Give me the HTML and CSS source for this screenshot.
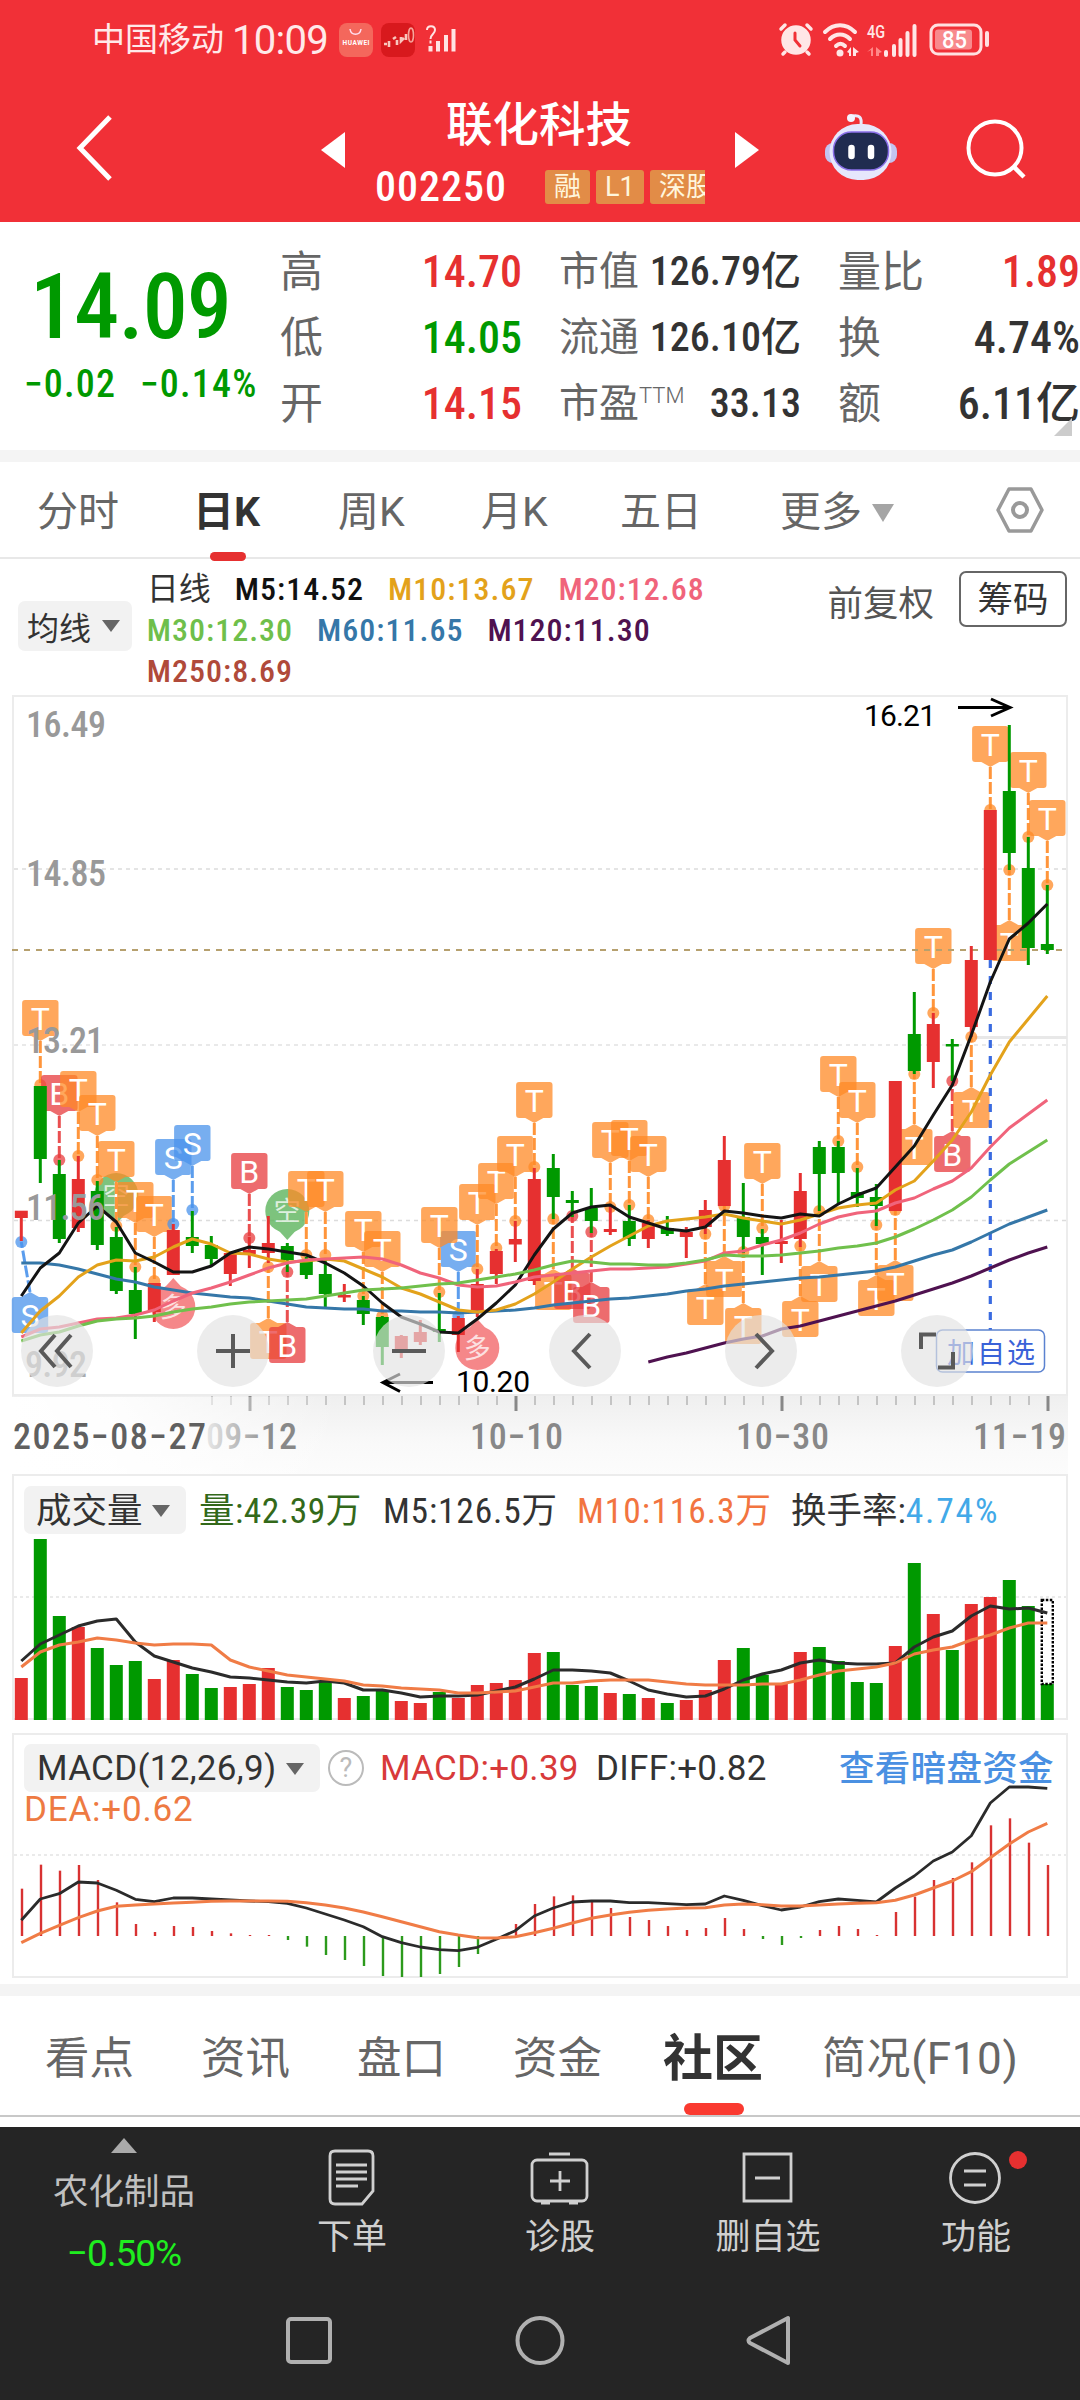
FILE: index.html
```html
<!DOCTYPE html>
<html lang="zh-CN">
<head>
    <meta charset="UTF-8">
    <meta name="viewport" content="width=device-width, initial-scale=1.0">
    <title>联化科技 002250</title>
    <link rel="stylesheet" href="styles.css">
</head>
<body>
    <header class="header">
        <div class="status">
            <span class="carrier">中国移动</span>
            <span class="clock">10:09</span>
            <svg class="app-icon" width="34" height="34" viewBox="0 0 34 34">
                <rect width="34" height="34" rx="8" fill="#f4675c"/>
                <path d="M11 6c1 7 10 7 11 0" fill="none" stroke="#fde" stroke-width="1.5"/>
                <text x="3.500" y="22" font-size="6.5" font-weight="700" fill="#fff" textLength="27">HUAWEI</text>
            </svg>
            <svg class="app-icon" width="34" height="34" viewBox="0 0 34 34">
                <rect width="34" height="34" rx="8" fill="#d8191d"/>
                <path d="M3 21h3M8 18v6M12 16l3-2M16 17v5M20 14v4l3-3M25 11v6" fill="none" stroke="#f9c7be" stroke-width="2.600"/>
                <ellipse cx="30" cy="12" rx="2.500" ry="7" fill="none" stroke="#f6a59c" stroke-width="1.6"/>
            </svg>
            <svg class="sim" width="32" height="34" viewBox="0 0 32 34">
                <path d="M2 7c0-5 8-5 8 0 0 4-4.500 4-4.500 9M5.500 17.500v3" fill="none" stroke="#ffe3e3" stroke-width="2"/>
                <path d="M5.500 23v5.500M13 18v10.500M21 12v16.500M28.500 6v22.500" stroke="#ffe3e3" stroke-width="4"/>
            </svg>
            <svg class="sys" width="216" height="36" viewBox="0 0 216 36">
                <g fill="none" stroke="#ffe6e6" stroke-width="3.5" stroke-linecap="round">
                    <circle cx="19" cy="18" r="13" fill="#ffe6e6"/>
                    <path d="M4 7l4-4M34 7l-4-4M8 30l-2 2M30 30l2 2"/>
                    <path d="M18 11v7l5 6" stroke="#f13037" stroke-width="3"/>
                    <path d="M48 10c9-9 21-9 30 0M53 17c6-6 14-6 20 0M59 24c3-3 6-3 9 0" stroke-width="4"/>
                </g>
                <circle cx="63" cy="31" r="3.5" fill="#ffe6e6"/>
                <path d="M74 25v9h-2v-3l-2-1zM76 34v-9l6 5-3 1v3z" fill="#ffe6e6"/>
                <text x="90" y="16" font-size="19" font-weight="500" fill="#ffe6e6" textLength="18" lengthAdjust="spacingAndGlyphs">4G</text>
                <path d="M96 25v9h-2v-6l-4 2zM99 34v-9l6 5-3 1v3z" fill="#f88"/>
                <path d="M109 30v3M117 24v9M123.500 18v15M130.500 11v22M137.500 4v29" stroke="#ffe6e6" stroke-width="4" stroke-linecap="round"/>
                <rect x="154" y="3" width="50" height="29" rx="7" fill="none" stroke="#ffe0e0" stroke-width="3"/>
                <rect x="158" y="7.500" width="37" height="20" rx="3" fill="#f88a8d"/>
                <path d="M210 11v12" stroke="#ffe0e0" stroke-width="4" stroke-linecap="round"/>
                <text x="165" y="26" font-size="23" font-weight="500" fill="#fff" textLength="25" lengthAdjust="spacingAndGlyphs">85</text>
            </svg>
        </div>
        <div class="titlebar">
            <svg class="back" width="46" height="72" viewBox="0 0 46 72"><path d="M39 5L9 36l30 31" fill="none" stroke="#fff" stroke-width="5"/></svg>
            <svg class="prev" width="26" height="38" viewBox="0 0 26 38"><path d="M25 1v36L1 19z" fill="#fff"/></svg>
            <div class="stock">
                <h1>联化科技</h1>
                <div class="code">
                    <span class="num">002250</span>
                    <div class="tags"><i>融</i><i>L1</i><i>深股</i></div>
                </div>
            </div>
            <svg class="next" width="26" height="38" viewBox="0 0 26 38"><path d="M1 1v36l24-18z" fill="#fff"/></svg>
            <svg class="robot" width="76" height="76" viewBox="0 0 76 76">
                <path d="M37 15c1-8-2-10-8-9" fill="none" stroke="#e9e9fb" stroke-width="3"/>
                <circle cx="27" cy="8" r="4" fill="#f3f3ff"/>
                <rect x="1" y="33" width="72" height="20" rx="8" fill="#c3c4f0"/>
                <rect x="5.500" y="14" width="62" height="56" rx="28" fill="#e6e7fc"/>
                <rect x="9.500" y="22" width="55" height="38" rx="18" fill="#202c50" stroke="#8a6fe8" stroke-width="1.500"/>
                <path d="M27.500 38v8M47 38v8" stroke="#fff" stroke-width="6.500" stroke-linecap="round"/>
            </svg>
            <svg class="search" width="66" height="66" viewBox="0 0 66 66"><circle cx="32" cy="32" r="26.500" fill="none" stroke="#fff" stroke-width="4"/><path d="M51 51l10 10" stroke="#fff" stroke-width="4.500"/></svg>
        </div>
    </header>

    <section class="quote">
        <div class="price green">
            <b>14.09</b>
            <div class="change"><span>−0.02</span><span>−0.14%</span></div>
        </div>
        <dl class="col c1">
            <dt>高</dt><dd class="red">14.70</dd>
            <dt>低</dt><dd class="green">14.05</dd>
            <dt>开</dt><dd class="red">14.15</dd>
        </dl>
        <dl class="col c2">
            <dt>市值</dt><dd>126.79亿</dd>
            <dt>流通</dt><dd>126.10亿</dd>
            <dt>市盈<sup>TTM</sup></dt><dd>33.13</dd>
        </dl>
        <dl class="col c3">
            <dt>量比</dt><dd class="red">1.89</dd>
            <dt>换</dt><dd>4.74%</dd>
            <dt>额</dt><dd>6.11亿</dd>
        </dl>
        <svg class="corner" width="18" height="18" viewBox="0 0 18 18"><path d="M18 0v18H0z" fill="#ccc"/></svg>
    </section>

    <nav class="period">
        <a>分时</a>
        <a class="on">日K</a>
        <a>周K</a>
        <a>月K</a>
        <a>五日</a>
        <a>更多<svg width="24" height="20" viewBox="0 0 24 20"><path d="M1 1h22L12 19z" fill="#a5a5a5"/></svg></a>
        <svg class="gear" width="52" height="50" viewBox="0 0 52 50"><path d="M14 4h22l11 21-11 21H14L3 25z" fill="none" stroke="#999" stroke-width="3.500" stroke-linejoin="round"/><circle cx="25" cy="25" r="7" fill="none" stroke="#999" stroke-width="4"/></svg>
    </nav>

    <section class="legend">
        <div class="select">均线<svg width="18" height="14" viewBox="0 0 18 14"><path d="M0 1h18L9 13z" fill="#666"/></svg></div>
        <div class="mas">
            <span class="day">日线</span><span class="m5">M5:14.52</span><span class="m10">M10:13.67</span><span class="m20">M20:12.68</span><br>
            <span class="m30">M30:12.30</span><span class="m60">M60:11.65</span><span class="m120">M120:11.30</span><br>
            <span class="m250">M250:8.69</span>
        </div>
        <span class="adjust">前复权</span>
        <span class="chips">筹码</span>
    </section>

    <section class="kline">
        <svg id="kline" width="1080" height="780" viewBox="0 695 1080 780"></svg>
        <div class="tools">
            <i><svg viewBox="0 0 72 72"><path d="M34 20L20 36l14 16M50 20L36 36l14 16"/></svg></i>
            <i><svg viewBox="0 0 72 72"><path d="M36 19v34M19 36h34"/></svg></i>
            <i><svg viewBox="0 0 72 72"><path d="M19 36h34"/></svg></i>
            <i><svg viewBox="0 0 72 72"><path d="M41 19L25 36l16 17"/></svg></i>
            <i><svg viewBox="0 0 72 72"><path d="M31 19l16 17-16 17"/></svg></i>
            <i><svg viewBox="0 0 72 72"><path d="M20 34V19.500h15M37 52.500h15V37"/></svg></i>
        </div>
    </section>

    <section class="panel volume">
        <div class="panel-head">
            <div class="select">成交量<svg width="18" height="14" viewBox="0 0 18 14"><path d="M0 1h18L9 13z" fill="#666"/></svg></div>
            <span class="v1">量:42.39万</span>
            <span class="v2">M5:126.5万</span>
            <span class="v3">M10:116.3万</span>
            <span class="v4">换手率:<em>4.74%</em></span>
        </div>
        <svg class="plot" id="volume" width="1080" height="260" viewBox="0 1473 1080 260"></svg>
    </section>

    <section class="panel macd">
        <div class="panel-head">
            <div class="select">MACD(12,26,9)<svg width="18" height="14" viewBox="0 0 18 14"><path d="M0 1h18L9 13z" fill="#666"/></svg></div>
            <span class="help">?</span>
            <span class="d1">MACD:+0.39</span>
            <span class="d2">DIFF:+0.82</span>
            <a class="dark-pool">查看暗盘资金</a>
        </div>
        <div class="dea">DEA:+0.62</div>
        <svg class="plot" id="macd" width="1080" height="251" viewBox="0 1733 1080 251"></svg>
    </section>

    <nav class="topics">
        <a>看点</a>
        <a>资讯</a>
        <a>盘口</a>
        <a>资金</a>
        <a class="on">社区</a>
        <a class="f10">简况(F10)</a>
    </nav>

    <footer class="footer">
        <div class="actions">
            <div class="sector">
                <svg width="26" height="15" viewBox="0 0 26 15"><path d="M13 0l13 15H0z" fill="#aaa"/></svg>
                <span>农化制品</span>
                <b>−0.50%</b>
            </div>
            <div class="act">
                <svg viewBox="0 0 60 60"><path d="M13 4h33q5 0 5 5v35L40 57H13q-5 0-5-5V9q0-5 5-5z"/><path d="M14 18h31M14 25h31M14 32h31M14 39h22"/></svg>
                <span>下单</span>
            </div>
            <div class="act">
                <svg viewBox="0 0 60 60"><rect x="2" y="13" width="55" height="41" rx="5"/><path d="M19 7h21M11 56h9M39 56h9M30 24v20M20 34h20"/></svg>
                <span>诊股</span>
            </div>
            <div class="act">
                <svg viewBox="0 0 60 60"><path d="M6 7h47v47H6zM17 31h25"/></svg>
                <span>删自选</span>
            </div>
            <div class="act">
                <svg viewBox="0 0 60 60"><circle cx="29" cy="31" r="24.500"/><path d="M18 24h22M18 38h22"/></svg>
                <span>功能</span>
                <i class="dot"></i>
            </div>
        </div>
        <div class="sysnav">
            <svg viewBox="0 0 50 50"><rect x="3" y="4" width="42" height="43" rx="3"/></svg>
            <svg viewBox="0 0 50 50"><circle cx="25" cy="25.500" r="22.500"/></svg>
            <svg viewBox="0 0 50 50"><path d="M43 3v45L5 28q-3-2 0-5z"/></svg>
        </div>
    </footer>
    <script src="script.js"></script>
</body>
</html>
```

FILE: styles.css
```css
* {
    margin: 0;
    padding: 0;
    box-sizing: border-box;
}

body {
    width: 1080px;
    height: 2400px;
    overflow: hidden;
    background: #fff;
    color: #333;
    font-family: Roboto, "Noto Sans CJK SC", sans-serif;
    font-stretch: 87%;
}

svg {
    display: block;
    flex: none;
    overflow: visible;
}

i,
em {
    font-style: normal;
}

span,
a {
    white-space: nowrap;
}

.red {
    color: #e63030 !important;
}

.green {
    color: #009900 !important;
}

/* 顶部 */
.header {
    height: 222px;
    background: #f13037;
    color: #fff;
}

.status {
    display: flex;
    align-items: center;
    height: 80px;
    padding: 0 87px 0 92px;
    color: #ffe9e9;
}

.carrier {
    width: 140px;
    font-size: 33px;
    line-height: 40px;
}

.clock {
    width: 107px;
    padding-top: 2px;
    font-size: 40px;
    line-height: 40px;
    font-stretch: 100%;
    letter-spacing: -0.7px;
}

.app-icon {
    margin-right: 8px;
}

.sim {
    margin-left: 2px;
}

.sys {
    margin-left: auto;
}

.titlebar {
    display: flex;
    align-items: flex-start;
    height: 142px;
    padding-left: 71px;
}

.back {
    margin-top: 32px;
}

.prev {
    margin: 51px 0 0 203px;
}

.stock {
    width: 388px;
    padding-left: 29px;
}

.stock h1 {
    height: 64px;
    margin-top: 13px;
    padding-left: 71px;
    font-size: 46.500px;
    font-weight: 500;
    line-height: 64px;
}

.code {
    display: flex;
    align-items: center;
    height: 58px;
    margin-top: 1px;
}

.code .num {
    width: 170px;
    font-size: 42px;
    line-height: 58px;
    font-weight: 500;
    letter-spacing: 1px;
}

.tags {
    display: flex;
    gap: 6px;
    width: 160px;
    overflow: hidden;
}

.tags i {
    flex: none;
    width: 45px;
    padding-left: 9px;
    height: 34px;
    line-height: 34px;
    border-radius: 3px;
    background: #e28c47;
    color: #fff6dc;
    font-size: 27px;
    font-stretch: 100%;
}

.tags i:nth-child(2) {
    width: 48px;
}

.tags i:nth-child(3) {
    width: 72px;
}

.next {
    margin-top: 51px;
}

.robot {
    margin: 30px 0 0 64px;
}

.search {
    margin: 36px 0 0 63px;
}

/* 报价 */
.quote {
    position: relative;
    display: flex;
    height: 240px;
    border-bottom: 12px solid #f4f4f4;
}

.price {
    width: 280px;
}

.price b {
    display: block;
    height: 100px;
    margin-top: 36px;
    padding-left: 30px;
    font-size: 90px;
    font-weight: 500;
    line-height: 100px;
    letter-spacing: -0.8px;
}

.change {
    display: flex;
    padding: 1px 0 0 24px;
    font-size: 38px;
    font-weight: 500;
    line-height: 50px;
    letter-spacing: 1.2px;
}

.change span:first-child {
    width: 116px;
}

.col {
    display: grid;
    grid-template-columns: 80px 1fr;
    grid-template-rows: repeat(3, 66px);
    padding-top: 17px;
    line-height: 66px;
    white-space: nowrap;
}

.col dt {
    color: #666;
    font-size: 43px;
}

.col dd {
    text-align: right;
    font-size: 44px;
    font-weight: 500;
}

.c1 {
    width: 242px;
}

.c2 {
    width: 279px;
    padding-left: 37px;
}

.c2 dt {
    font-size: 40px;
}

.c2 dd {
    font-size: 40px;
}

.c3 {
    width: 279px;
    padding-left: 37px;
}

.c2 sup {
    font-size: 22px;
    font-weight: 300;
    line-height: 0;
    font-stretch: 100%;
}

.corner {
    position: absolute;
    right: 8px;
    bottom: 14px;
}

/* 周期 */
.period {
    display: grid;
    grid-template-columns: 156px 145px 143px 139px 160px 215px 60px;
    height: 97px;
    padding-left: 37px;
    border-bottom: 2px solid #e8e8e8;
    font-size: 41px;
    line-height: 97px;
    color: #666;
    font-stretch: 100%;
}

.period a {
    display: flex;
    align-items: center;
    gap: 9px;
    position: relative;
    padding-top: 2px;
}

.period .on {
    color: #333;
    font-weight: 700;
}

.period .on::after {
    content: '';
    position: absolute;
    left: 17px;
    bottom: 0;
    width: 36px;
    height: 9px;
    border-radius: 5px;
    background: #e63030;
}

.gear {
    margin-top: 23px;
}

/* 均线 */
.legend {
    display: flex;
    height: 136px;
    padding: 12px 13px 0 18px;
    font-size: 32px;
}

.select {
    display: flex;
    align-items: center;
    justify-content: space-between;
    border-radius: 7px;
    background: #f2f2f2;
    color: #333;
}

.legend .select {
    width: 114px;
    height: 50px;
    margin-top: 30px;
    padding: 0 12px 0 9px;
}

.mas {
    width: 679px;
    padding-left: 15px;
    line-height: 41px;
    margin-top: -2px;
    font-weight: 500;
    letter-spacing: 1px;
}

.mas span {
    margin-right: 24px;
}

.mas .day {
    font-weight: 400;
    letter-spacing: 0;
}

.m5 { color: #111; }
.m10 { color: #e3a21b; }
.m20 { color: #f0647b; }
.m30 { color: #6fbf4b; }
.m60 { color: #3577a8; }
.m120 { color: #4f1250; }
.m250 { color: #b04a3a; }

.adjust {
    width: 150px;
    padding-left: 18px;
    line-height: 66px;
    font-size: 35.500px;
    color: #555;
}

.chips {
    width: 108px;
    height: 56px;
    border: 2px solid #666;
    border-radius: 7px;
    text-align: center;
    font-size: 35.500px;
    line-height: 55px;
}

/* K线 */
.kline {
    position: relative;
    height: 780px;
}

.tools {
    position: absolute;
    top: 620px;
    left: 21px;
    display: flex;
    gap: 104px;
}

.tools i {
    width: 72px;
    height: 72px;
    border-radius: 50%;
    background: rgba(226, 226, 226, 0.66);
}

.tools path {
    fill: none;
    stroke: #5a5a5a;
    stroke-width: 4;
}

svg text {
    font-family: Roboto, "Noto Sans CJK SC", sans-serif;
    font-stretch: 100%;
}

svg .label {
    font-stretch: 87%;
    font-weight: 500;
}

/* 副图 */
.panel {
    position: relative;
    padding: 11px 0 0 24px;
    font-size: 35.500px;
}

.volume {
    height: 258px;
}

.macd {
    height: 263px;
    border-bottom: 12px solid #f4f4f4;
    font-stretch: 100%;
    font-size: 35px;
    letter-spacing: 0.3px;
}

.plot {
    position: absolute;
    top: 0;
    left: 0;
}

.volume .plot {
    top: -2px;
}

.panel-head {
    position: relative;
    z-index: 1;
    display: flex;
    align-items: center;
    height: 48px;
    line-height: 50px;
    white-space: nowrap;
}

.panel-head > span,
.dark-pool {
    padding-top: 2px;
}

.volume .select {
    width: 162px;
    height: 48px;
    padding: 1px 16px 0 12px;
}

.v1 {
    width: 184px;
    margin-left: 13px;
    color: #33691a;
    letter-spacing: 0.5px;
}

.v2 {
    width: 194px;
    letter-spacing: 0.8px;
}

.v3 {
    width: 214px;
    color: #f27440;
    letter-spacing: 1px;
}

.v4 em {
    color: #42a9e8;
    letter-spacing: 1.800px;
}

.macd .select {
    width: 296px;
    height: 48px;
    padding: 2px 16px 0 13px;
}

.panel-head .help {
    width: 36px;
    height: 36px;
    margin-left: 8px;
    padding: 0;
    border: 2.500px solid #bbb;
    border-radius: 50%;
    color: #bbb;
    text-align: center;
    font-size: 27px;
    line-height: 32px;
}

.d1 {
    width: 216px;
    margin-left: 16px;
    color: #d83a3a;
}

.d2 {
    width: 243px;
}

.dark-pool {
    color: #4a90e2;
    font-size: 35.500px;
    font-weight: 500;
}

.dea {
    position: relative;
    z-index: 1;
    color: #ee7a42;
    line-height: 36px;
    letter-spacing: 0.8px;
}

/* 栏目 */
.topics {
    display: flex;
    height: 121px;
    padding-left: 45px;
    border-bottom: 2px solid #c8c8c8;
    font-size: 44.500px;
    font-stretch: 100%;
    line-height: 127px;
    color: #666;
}

.topics a {
    width: 156px;
    position: relative;
}

.topics .on {
    width: 153px;
    margin-left: -6px;
    color: #333;
    font-size: 50px;
    font-weight: 700;
}

.topics .on::after {
    content: '';
    position: absolute;
    left: 21px;
    bottom: 0;
    width: 60px;
    height: 12px;
    border-radius: 6px;
    background: #fa3a30;
}

.topics .f10 {
    margin-left: 6px;
    font-size: 44px;
    letter-spacing: 0.6px;
}

/* 底部 */
.footer {
    height: 273px;
    margin-top: 10px;
    background: #252525;
    color: #d0d0d0;
}

.actions {
    display: grid;
    grid-template-columns: 248px 208px 208px 208px 208px;
    height: 165px;
}

.sector {
    display: flex;
    flex-direction: column;
    align-items: center;
    padding-top: 11px;
    font-size: 35.500px;
    color: #c0c0c0;
}

.sector span {
    height: 62px;
    margin-top: 8px;
    line-height: 62px;
}

.sector b {
    color: #1fee1f;
    font-size: 37px;
    font-weight: 400;
    font-stretch: 100%;
    line-height: 62px;
    letter-spacing: -1px;
}

.act {
    position: relative;
    display: flex;
    flex-direction: column;
    align-items: center;
    padding-top: 20px;
    font-size: 35px;
    line-height: 62px;
}

.act svg {
    width: 60px;
    height: 60px;
    fill: none;
    stroke: #d0d0d0;
    stroke-width: 2.8;
}

.dot {
    position: absolute;
    top: 24px;
    left: 137px;
    width: 18px;
    height: 18px;
    border-radius: 50%;
    background: #e63030;
}

.sysnav {
    display: flex;
    justify-content: center;
    gap: 180px;
    padding-top: 23px;
}

.sysnav svg {
    width: 50px;
    height: 50px;
    fill: none;
    stroke: #b0b0b0;
    stroke-width: 4;
    stroke-linejoin: round;
}
```

FILE: script.js
```javascript
let RED = '#e63030'
let GREEN = '#009900'
let X = i => 21.3 + i * 19 // 每根K线间隔19

function line(pts, color, w = 3, start = 0, f = v => v) {
    let p = pts.map((v, i) => X(i + start).toFixed(1) + ',' + f(v).toFixed(1)).join(' ')
    return `<polyline points="${p}" fill="none" stroke="${color}" stroke-width="${w}" stroke-linejoin="round"/>`
}

function rect(x, y, w, h, fill, more = '') {
    return `<rect x="${x}" y="${y}" width="${w}" height="${h}" fill="${fill}" ${more}/>`
}

function seg(x1, y1, x2, y2, color, w, dash = '') {
    return `<line x1="${x1}" y1="${y1}" x2="${x2}" y2="${y2}" stroke="${color}" stroke-width="${w}" stroke-dasharray="${dash}"/>`
}

function text(x, y, s, size, fill, len, more = '') {
    return `<text x="${x}" y="${y}" font-size="${size}" fill="${fill}" textLength="${len}" ${more}>${s}</text>`
}

// 颜色, 实体上, 实体下, 最高, 最低
let candles = [
    ['r', 1210.7, 1218, 1211, 1241], ['g', 1086, 1159, 1086, 1183], ['g', 1174, 1239, 1160, 1243],
    ['r', 1179, 1228, 1156, 1232], ['g', 1191, 1245, 1181, 1250], ['g', 1237, 1291, 1227, 1294],
    ['g', 1290, 1314, 1267, 1339], ['r', 1283, 1312, 1283, 1322], ['r', 1230, 1275, 1224, 1275],
    ['g', 1237, 1246, 1211, 1253], ['g', 1245, 1259, 1236, 1265], ['r', 1253, 1274, 1253, 1286],
    ['r', 1250, 1254, 1237, 1268], ['r', 1243, 1253, 1216, 1263], ['g', 1246, 1260, 1243, 1272],
    ['g', 1261, 1275, 1257, 1279], ['g', 1274, 1294, 1260, 1307], ['r', 1295, 1297.5, 1284, 1302],
    ['g', 1300, 1314, 1296, 1325], ['g', 1317, 1347, 1316, 1365], ['r', 1336, 1352, 1335, 1358],
    ['r', 1332, 1342, 1320, 1345], ['g', 1329, 1332, 1293, 1342], ['r', 1318, 1335, 1316, 1352],
    ['r', 1284, 1312, 1269, 1317], ['r', 1251, 1274, 1249, 1284], ['r', 1239, 1244.5, 1221, 1262],
    ['r', 1179, 1281, 1168, 1285], ['g', 1168, 1197, 1154, 1219], ['g', 1200, 1203, 1191, 1217],
    ['g', 1208, 1221, 1188, 1233], ['r', 1229, 1232, 1205, 1235], ['g', 1221, 1239, 1205, 1246],
    ['r', 1223, 1239, 1220, 1248], ['g', 1228, 1234, 1216, 1236], ['r', 1232, 1237, 1227, 1258],
    ['r', 1210, 1227, 1200, 1234], ['r', 1160, 1206, 1136, 1206], ['g', 1217, 1237, 1183, 1253],
    ['g', 1237, 1244, 1229, 1275], ['r', 1241, 1244, 1220, 1263], ['r', 1191, 1239, 1173, 1247],
    ['g', 1147, 1174, 1141, 1211], ['g', 1147, 1173, 1141, 1205], ['g', 1192, 1198, 1168, 1207],
    ['g', 1197, 1206, 1184, 1226], ['r', 1081, 1211, 1081, 1211], ['g', 1034, 1071, 992, 1074],
    ['r', 1024, 1062, 1013, 1088], ['g', 1044, 1046.5, 1039, 1081], ['r', 960, 1027, 946, 1037],
    ['r', 810, 960, 810, 960], ['g', 791, 853, 725, 870], ['g', 868, 948, 837, 965], ['g', 944, 950, 885, 954]
]

// 类型, 序号, 方框顶部, 圆点位置
let marks = [
    ['T', 1, 1000, 1085], ['B', 2, 1075, 1160], ['T', 3, 1071, 1156], ['T', 4, 1095, 1180], ['T', 5, 1141, 1226],
    ['T', 6, 1182, 1267], ['T', 7, 1196, 1281], ['S', 8, 1139, 1224], ['S', 9, 1125, 1210], ['B', 12, 1153, 1238],
    ['T', 15, 1171, 1255], ['T', 16, 1171, 1255], ['T', 18, 1211, 1296], ['T', 19, 1231, 1316], ['S', 23, 1231, 1316],
    ['T', 22, 1207, 1292], ['T', 24, 1184, 1269], ['T', 25, 1163, 1248], ['T', 26, 1136, 1221], ['T', 27, 1082, 1167],
    ['T', 31, 1122, 1207], ['T', 32, 1120, 1205], ['T', 33, 1136, 1220], ['T', 39, 1143, 1228], ['T', 43, 1056, 1141],
    ['T', 44, 1082, 1167], ['T', 48, 928, 1013], ['T', 51, 726, 810], ['T', 53, 752, 837], ['T', 54, 800, 885],
    ['S', 0, 1297, 1242], ['T', 13, 1323, 1267], ['B', 14, 1327, 1272], ['T', 28, 1274, 1219], ['B', 29, 1273, 1216],
    ['B', 30, 1287, 1232], ['T', 36, 1289, 1234], ['T', 37, 1261, 1206], ['T', 38, 1308, 1252], ['T', 41, 1301, 1246],
    ['T', 42, 1266, 1211], ['T', 45, 1280, 1225], ['T', 46, 1265, 1210], ['T', 47, 1129, 1074], ['B', 49, 1136, 1081],
    ['T', 50, 1092, 1037], ['T', 52, 925, 870]
]
let markColor = { T: '#ff8a26', B: '#e83c3e', S: '#4a93ec' }

let ma5 = [1296, 1268, 1253, 1223, 1206, 1222, 1253, 1262, 1272, 1272, 1266, 1253, 1247, 1249, 1252, 1255, 1263, 1273, 1286, 1303,
    1317, 1324, 1332, 1333, 1319, 1303, 1285, 1255, 1229, 1213, 1207, 1205, 1217, 1223, 1229, 1231, 1227, 1211, 1213, 1216,
    1218, 1214, 1216, 1204, 1195, 1188, 1167, 1146, 1115, 1085, 1035, 982, 939, 923, 904]
let ma10 = [1333, 1311, 1296, 1277, 1265, 1260, 1261, 1257, 1247, 1239, 1244, 1253, 1254, 1259, 1262, 1261, 1259, 1261, 1269, 1277,
    1288, 1294, 1302, 1310, 1312, 1310, 1304, 1294, 1282, 1269, 1257, 1246, 1236, 1226, 1221, 1219, 1217, 1214, 1218, 1221,
    1224, 1220, 1214, 1208, 1205, 1203, 1190, 1181, 1161, 1140, 1112, 1075, 1042, 1019, 996]
let ma20 = [1337, 1329, 1327, 1323, 1319, 1318, 1315, 1310, 1301, 1293, 1288, 1282, 1275, 1268, 1263, 1260, 1259, 1258, 1257, 1259,
    1265, 1273, 1278, 1285, 1287, 1286, 1282, 1277, 1275, 1273, 1271, 1269, 1269, 1268, 1267, 1264, 1261, 1253, 1251, 1245,
    1240, 1233, 1224, 1217, 1213, 1211, 1203, 1198, 1189, 1181, 1168, 1147, 1128, 1114, 1100]
let ma30 = [1341, 1335, 1332, 1326, 1321, 1319, 1318, 1316, 1312, 1309, 1307, 1304, 1302, 1301, 1300, 1299, 1296, 1293, 1290, 1289,
    1288, 1286, 1284, 1283, 1280, 1277, 1274, 1270, 1265, 1261, 1262, 1264, 1264, 1265, 1265, 1263, 1260, 1255, 1256, 1256,
    1255, 1253, 1251, 1248, 1246, 1243, 1237, 1229, 1220, 1210, 1197, 1180, 1164, 1152, 1140]
let ma60 = [1263, 1263, 1265, 1269, 1274, 1279, 1282, 1287, 1290, 1293, 1295, 1297, 1298, 1301, 1304, 1307, 1308, 1309, 1309, 1311,
    1311, 1312, 1312, 1313, 1312, 1311, 1310, 1308, 1305, 1303, 1301, 1299, 1298, 1296, 1294, 1291, 1289, 1286, 1284, 1282,
    1280, 1278, 1277, 1275, 1273, 1271, 1267, 1261, 1255, 1250, 1242, 1233, 1224, 1217, 1210]
let ma120 = [1362, 1357, 1353, 1348, 1343, 1339, 1336, 1329, 1326, 1321, 1316, 1311, 1306, 1301, 1295, 1289, 1283, 1276, 1268, 1260, 1253, 1247]

function mark([type, i, top, dot]) {
    let c = markColor[type]
    let x = X(i)
    let bx = Math.max(x, 30) // 第一个方框不超出左边界
    let above = top < dot
    let tip = above ? top + 41 : top - 5
    let base = above ? top + 36 : top
    let s = seg(bx, tip, x, dot, '#fff', 3) + seg(bx, tip, x, dot, c, 3, '12 3').replace('/>', ' opacity=".9"/>')
    s += `<circle cx="${x}" cy="${dot}" r="6" fill="${c}" opacity=".75"/>`
    s += `<g opacity=".75">${rect(bx - 18.2, top, 36.4, 36, c, 'rx="3"')}<path d="M${bx - 9} ${base}L${bx} ${tip}L${bx + 9} ${base}z" fill="${c}"/></g>`
    s += `<text x="${bx}" y="${top + 30}" font-size="32" fill="#fff" text-anchor="middle">${type}</text>`
    return s
}

function bubble(x, y, c, s, up, o) {
    let d = up ? -1 : 1
    return `<g opacity="${o}"><circle cx="${x}" cy="${y}" r="22" fill="${c}"/>
        <path d="M${x - 10} ${y + d * 18}L${x} ${y + d * 29}L${x + 10} ${y + d * 18}z" fill="${c}"/>
        <text x="${x}" y="${y + 10}" font-size="27" fill="#fff" opacity=".75" text-anchor="middle">${s}</text></g>`
}

function drawKline() {
    let h = `<defs>
        <linearGradient id="ax" x1="0" y1="0" x2="0" y2="1"><stop offset="0" stop-color="#efefef"/><stop offset=".6" stop-color="#f9f9f9"/><stop offset="1" stop-color="#fcfcfc"/></linearGradient>
        <linearGradient id="fade" gradientUnits="userSpaceOnUse" x1="12" y1="0" x2="340" y2="0"><stop offset="0" stop-color="#fff"/><stop offset=".3" stop-color="#fff" stop-opacity=".9"/><stop offset="1" stop-color="#fff" stop-opacity="0"/></linearGradient>
        <linearGradient id="dt" gradientUnits="userSpaceOnUse" x1="200" y1="0" x2="275" y2="0"><stop offset="0" stop-color="#f0f0f0"/><stop offset="1" stop-color="#888"/></linearGradient>
    </defs>`
    h += rect(12, 1396, 1056, 79, 'url(#ax)')
    h += rect(13, 696, 1054, 699, '#fff', 'stroke="#ececec" stroke-width="2"')
    h += seg(14, 869, 1066, 869, '#dcdcdc', 1.3, '4 4') + seg(14, 1045, 1066, 1045, '#e9e9e9', 2, '4 4') + seg(14, 1220.5, 1066, 1220.5, '#dcdcdc', 1.3, '4 4')
    h += seg(975, 1037.5, 1067, 1037.5, '#e8e8e8', 3)
    h += bubble(X(5), 1195, '#5db55d', '空', false, 0.8)
    h += bubble(X(14), 1211, '#5db55d', '空', false, 0.8)
    h += bubble(X(8), 1307, '#f36a6c', '多', true, 0.8)
    h += bubble(X(24), 1348, '#f36a6c', '多', true, 0.8)
    h += marks.map(mark).join('')
    h += seg(12, 950, 1066, 950, '#b6a06e', 1.8, '6 6')
    h += seg(990.3, 960, 990.3, 1340, '#3a6be0', 3.2, '8 8')
    candles.forEach(([c, t, b, hi, lo], i) => {
        let col = c == 'r' ? RED : GREEN
        h += seg(X(i), hi, X(i), lo, col, 3) + rect(X(i) - 6.5, t, 13, b - t, col)
    })
    h += line(ma120, '#4f1250', 3, 33) + line(ma60, '#3577a8') + line(ma10, '#e3a21b') + line(ma5, '#141414')
    h += line(ma20, '#f0647b') + line(ma30, '#70c04c')
    // 价格刻度
    let lab = 'class="label"'
    h += text(26, 737, '16.49', 36, '#999', 80, lab) + text(26, 886, '14.85', 36, '#999', 80, lab)
    h += text(26, 1053, '13.21', 36, '#999', 78, lab) + text(26, 1220, '11.56', 36, '#999', 79, lab) + text(25, 1377, '9.92', 36, '#aaa', 62, lab)
    // 最高最低
    h += text(864, 726, '16.21', 30, '#000', 72) + text(456, 1392, '10.20', 30, '#000', 74)
    h += `<path d="M958 707.500h51M991 699l19 8.500-19 8.500" fill="none" stroke="#000" stroke-width="3"/>`
    h += `<path d="M433 1382.500h-50M400 1374l-17 8.500 17 9" fill="none" stroke="#000" stroke-width="3"/>`
    h += rect(936.5, 1330, 108, 42, '#fff', 'rx="6" stroke="#5b82d0" stroke-width="1.5"') + text(947, 1363, '加自选', 28, '#3a62d8', 88)
    // 日期刻度
    for (let i = 10; i < 55; i++) {
        let major = (i - 12) % 14 == 0
        h += seg(X(i) + 0.7, 1396, X(i) + 0.7, major ? 1411 : 1405, major ? '#888' : '#c4c4c4', major ? 3 : 2)
    }
    h += rect(12, 1397, 328, 78, 'url(#fade)')
    h += text(206, 1449, '09−12', 36, 'url(#dt)', 91, lab) + text(470, 1449, '10−10', 36, '#888', 93, lab)
    h += text(736, 1449, '10−30', 36, '#888', 93, lab) + text(973, 1449, '11−19', 36, '#888', 93, lab)
    h += text(13, 1449, '2025−08−27', 36, '#606060', 193, lab)
    document.querySelector('#kline').innerHTML = h
}

// 成交量柱顶部
let vols = 'r1678 g1539 g1616 r1627 g1648 g1665 g1661 r1679 r1660 g1674 g1688 r1687 r1684 r1668 g1687 g1690 g1682 r1698 g1696 g1690 r1701 r1703 g1692 r1698 r1685 r1683 r1680 r1653 g1652 g1685 g1686 r1693 g1694 r1698 g1703 r1700 r1690 r1660 g1648 g1675 r1684 r1652 g1647 g1661 g1682 g1683 r1646 g1563 r1614 g1650 r1604 r1597 g1580 g1606 g1684'.split(' ')
let vma5 = [1661, 1644, 1635, 1626, 1621, 1619, 1642, 1656, 1662, 1668, 1672, 1677, 1678, 1680, 1682, 1683, 1681, 1683, 1690, 1690,
    1693, 1697, 1696, 1696, 1695, 1691, 1687, 1679, 1670, 1670, 1671, 1673, 1681, 1690, 1694, 1697, 1696, 1689, 1680, 1674,
    1670, 1663, 1660, 1663, 1664, 1664, 1663, 1647, 1637, 1631, 1616, 1606, 1609, 1608, 1613]
let vma10 = [1667, 1652, 1645, 1642, 1638, 1640, 1643, 1645, 1644, 1644, 1645, 1660, 1667, 1671, 1675, 1677, 1679, 1681, 1685, 1686,
    1688, 1689, 1690, 1693, 1693, 1692, 1691, 1687, 1683, 1683, 1681, 1680, 1680, 1680, 1682, 1684, 1685, 1685, 1685, 1684,
    1684, 1680, 1675, 1671, 1669, 1667, 1663, 1654, 1650, 1647, 1640, 1635, 1628, 1623, 1623]

function drawVolume() {
    let h = rect(13, 1475, 1054, 244, '#fff', 'stroke="#ececec" stroke-width="2"')
    h += seg(14, 1597, 1066, 1597, '#e4e4e4', 1.5, '3 3')
    vols.forEach((v, i) => {
        let y = +v.slice(1)
        h += rect(X(i) - 6.5, y, 13, 1720 - y, v[0] == 'r' ? RED : GREEN)
    })
    h += rect(X(54) - 5.5, 1600, 11, 84, 'none', 'stroke="#000" stroke-width="2.4" stroke-dasharray="2.500 1.500"')
    h += line(vma5, '#2b2b2b') + line(vma10, '#f07c46')
    document.querySelector('#volume').innerHTML = h
}

// MACD 数据以 1/3 像素为单位, 零轴 648
let bars = [506, 434, 452, 435, 480, 547, 612, 636, 618, 621, 633, 640, 645, 645, 660, 680, 705, 720, 738, 768, 771, 771, 762, 741, 702, 648,
    612, 552, 529, 526, 545, 564, 591, 600, 618, 630, 624, 594, 627, 657, 675, 654, 630, 618, 627, 645, 576, 530, 480, 474, 427, 316, 295, 368, 435]
let diff = [601, 537, 521, 486, 489, 511, 538, 545, 534, 534, 537, 540, 543, 545, 550, 564, 582, 600, 620, 650, 668, 681, 689, 692, 682, 658,
    632, 588, 564, 546, 543, 543, 548, 548, 551, 554, 552, 528, 541, 557, 570, 561, 545, 537, 541, 546, 504, 468, 423, 396, 347, 249, 201, 201, 205]
let dea = [668, 640, 616, 593, 573, 559, 555, 552, 549, 547, 544, 543, 543, 543, 544, 548, 555, 564, 576, 590, 605, 620, 635, 645, 653, 654,
    650, 638, 625, 609, 595, 585, 577, 571, 567, 564, 563, 555, 552, 554, 558, 558, 555, 552, 550, 548, 541, 525, 504, 483, 455, 413, 372, 336, 310]

function drawMacd() {
    let f = v => 1720 + v / 3
    let h = rect(13, 1734, 1054, 243, '#fff', 'stroke="#ececec" stroke-width="2"')
    h += seg(14, 1855, 1066, 1855, '#e4e4e4', 1.5, '3 3')
    bars.forEach((v, i) => {
        h += seg(X(i) + 0.7, 1936, X(i) + 0.7, f(v), v > 648 ? '#2c9a1c' : '#d83232', 2.4)
    })
    h += line(diff, '#2b2b2b', 2.8, 0, f) + line(dea, '#f07c46', 3, 0, f)
    document.querySelector('#macd').innerHTML = h
}

drawKline()
drawVolume()
drawMacd()
```
